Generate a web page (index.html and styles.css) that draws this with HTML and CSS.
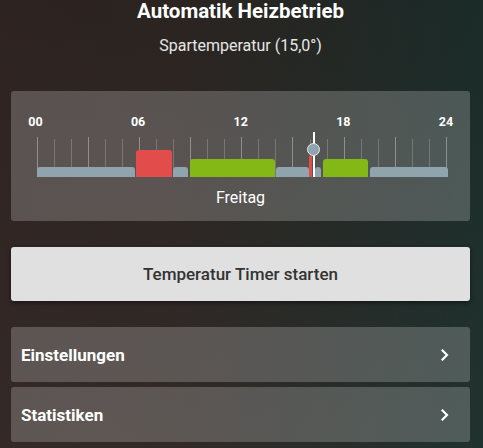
FILE: index.html
```html
<!DOCTYPE html>
<html lang="de">
<head>
<meta charset="utf-8">
<title>Automatik Heizbetrieb</title>
<link rel="stylesheet" href="styles.css">
</head>
<body>
<main class="page">
  <header class="head">
    <h1 class="title">Automatik Heizbetrieb</h1>
    <p class="subtitle">Spartemperatur (15,0°)</p>
  </header>

  <section class="card schedule">
    <div class="timeline">
      <div class="hours">
        <span class="hour"><b>00</b></span>
        <span class="hour"><b>06</b></span>
        <span class="hour"><b>12</b></span>
        <span class="hour"><b>18</b></span>
        <span class="hour"><b>24</b></span>
      </div>
      <div class="track">
        <div class="ticks">
          <i class="tick major"></i><i class="tick"></i><i class="tick"></i>
          <i class="tick major"></i><i class="tick"></i><i class="tick"></i>
          <i class="tick major"></i><i class="tick"></i><i class="tick"></i>
          <i class="tick major"></i><i class="tick"></i><i class="tick"></i>
          <i class="tick major"></i><i class="tick"></i><i class="tick"></i>
          <i class="tick major"></i><i class="tick"></i><i class="tick"></i>
          <i class="tick major"></i><i class="tick"></i><i class="tick"></i>
          <i class="tick major"></i><i class="tick"></i><i class="tick"></i>
          <i class="tick major"></i>
        </div>
        <div class="seg low" style="left:0px;width:97.5px"></div>
        <div class="seg high" style="left:98.5px;width:36px"></div>
        <div class="seg low" style="left:135.5px;width:15.5px"></div>
        <div class="seg mid" style="left:152.5px;width:85px"></div>
        <div class="seg low" style="left:238.5px;width:33px"></div>
        <div class="seg high thin" style="left:271.5px;width:3px"></div>
        <div class="seg low" style="left:277.5px;width:6.5px"></div>
        <div class="seg mid" style="left:285.5px;width:45.5px"></div>
        <div class="seg low" style="left:332.5px;width:78px"></div>
        <div class="now" style="left:275.5px">
          <span class="knob"></span>
        </div>
      </div>
    </div>
    <div class="day">Freitag</div>
  </section>

  <button class="start" type="button">Temperatur Timer starten</button>

  <nav class="menu">
    <a class="card item" href="#">
      <span>Einstellungen</span>
      <svg class="chev" width="8" height="12" viewBox="0 0 8 12"><path d="M1.5 1.5 L6 6 L1.5 10.5" fill="none" stroke="#fff" stroke-width="2.2" stroke-linecap="square"/></svg>
    </a>
    <a class="card item" href="#">
      <span>Statistiken</span>
      <svg class="chev" width="8" height="12" viewBox="0 0 8 12"><path d="M1.5 1.5 L6 6 L1.5 10.5" fill="none" stroke="#fff" stroke-width="2.2" stroke-linecap="square"/></svg>
    </a>
  </nav>
</main>
</body>
</html>
```

FILE: styles.css
```css
* { box-sizing: border-box; }

html, body {
  margin: 0;
  padding: 0;
}

body {
  min-height: 448px;
  font-family: Roboto, "Noto Sans", sans-serif;
  color: #fff;
  background:
    linear-gradient(180deg, rgba(0,0,0,0.06), rgba(255,255,255,0.02)),
    linear-gradient(90deg, #302522 0%, #2e2623 35%, #262926 65%, #1c2e2b 100%);
}

.page {
  width: 459px;
  margin-left: 11px;
  padding-top: 1px;
  padding-bottom: 7px;
}

.head {
  text-align: center;
}

.title {
  margin: 0;
  font-size: 20.5px;
  line-height: 20px;
  font-weight: 700;
}

.subtitle {
  margin: 15px 0 0;
  font-size: 16px;
  line-height: 20px;
  color: #e6e6e6;
}

.card {
  background: rgba(255, 255, 255, 0.21);
  border-radius: 3px;
}

.schedule {
  margin-top: 35px;
  padding: 24px 23px 14px 26px;
}

.timeline {
  width: 410px;
}

.hours {
  display: flex;
  justify-content: space-between;
  height: 14px;
  margin-left: -1.5px;
  margin-right: 1px;
}

.hour {
  width: 0;
  display: flex;
  justify-content: center;
}

.hour b {
  font-size: 12.5px;
  line-height: 14px;
  font-weight: 700;
  white-space: nowrap;
}

.track {
  position: relative;
  height: 40px;
  margin-top: 8px;
}

.ticks {
  display: flex;
  justify-content: space-between;
  align-items: flex-end;
  height: 40px;
}

.tick {
  width: 1px;
  height: 38px;
  background: rgba(255, 255, 255, 0.2);
}

.tick.major {
  height: 40px;
  background: rgba(255, 255, 255, 0.35);
}

.seg {
  position: absolute;
  bottom: 0;
  border-radius: 3px 3px 0 0;
}

.seg.low { height: 10px; background: #90a4ae; }
.seg.mid { height: 18px; background: #84b817; }
.seg.high { height: 27px; background: #e24c4a; }
.seg.thin { height: 21px; border-radius: 0; }

.now {
  position: absolute;
  top: -5px;
  bottom: 0;
  width: 2px;
  background: #fff;
}

.knob {
  position: absolute;
  top: 11px;
  left: -5.5px;
  width: 13px;
  height: 13px;
  border-radius: 50%;
  background: #90a4ae;
  border: 1.5px solid #e8e8e8;
}

.day {
  margin-top: 12px;
  margin-right: 3px;
  text-align: center;
  font-size: 16px;
  line-height: 18px;
}

.start {
  display: block;
  width: 100%;
  height: 54px;
  margin-top: 26px;
  border: 0;
  border-radius: 3px;
  background: #e0e0e0;
  box-shadow: 0 2px 4px rgba(0, 0, 0, 0.45);
  font-family: Roboto, "Noto Sans", sans-serif;
  font-size: 17px;
  font-weight: 500;
  color: #333;
}

.menu {
  display: flex;
  flex-direction: column;
  gap: 5px;
  margin-top: 26px;
}

.item {
  display: flex;
  align-items: center;
  justify-content: space-between;
  height: 55px;
  padding: 0 21px 0 10px;
  color: #fff;
  text-decoration: none;
  font-size: 17px;
  font-weight: 700;
}

.chev {
  display: block;
}
```
